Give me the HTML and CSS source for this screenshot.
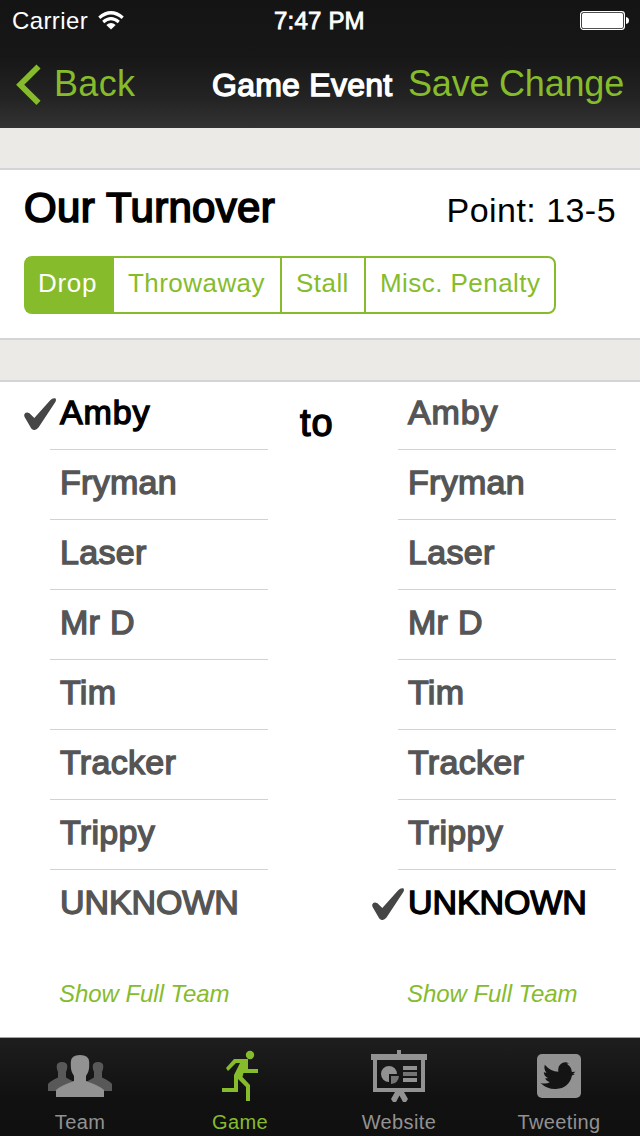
FILE: index.html
```html
<!DOCTYPE html>
<html lang="en">
<head>
<meta charset="utf-8">
<title>Game Event</title>
<link rel="stylesheet" href="styles.css">
</head>
<body>
<div class="app">
  <header class="top">
    <div class="status">
      <div class="carrier"><span>Carrier</span>
        <svg class="wifi" width="26" height="20" viewBox="0 0 26 20"><g fill="none" stroke="#fff"><path d="M1.300 6.700Q13 -3.200 24.700 6.700" stroke-width="3.200"/><path d="M5.200 11Q13 4.300 20.800 11" stroke-width="3"/></g><path d="M8.300 14Q13 10.200 17.700 14L13 18.600z" fill="#fff"/></svg>
      </div>
      <div class="clock">7:47 PM</div>
      <svg class="battery" width="50" height="20" viewBox="0 0 50 20"><rect x=".6" y=".6" width="43.800" height="17.800" rx="2.800" fill="none" stroke="#fff" stroke-width="1.200"/><rect x="2" y="2" width="41" height="15" rx="1.500" fill="#fff"/><path d="M46 6q3 .5 3 3.500t-3 3.500z" fill="#fff"/></svg>
    </div>
    <nav class="nav">
      <a class="back"><svg width="26" height="42" viewBox="0 0 26 42"><path d="M22.500 2.500L4.200 20.700L22.500 38.900" fill="none" stroke="#86bc2b" stroke-width="5.800"/></svg><span>Back</span></a>
      <h1 class="title medium">Game Event</h1>
      <a class="save">Save Change</a>
    </nav>
  </header>
  <section class="event">
    <div class="summary">
      <h2 class="kind medium">Our Turnover</h2>
      <div class="point">Point: 13-5</div>
    </div>
    <div class="segments">
      <div class="seg seg-drop on">Drop</div>
      <div class="seg seg-throw">Throwaway</div>
      <div class="seg seg-stall">Stall</div>
      <div class="seg seg-misc">Misc. Penalty</div>
    </div>
  </section>
  <main class="players">
    <div class="column">
      <ul class="list">
        <li class="medium chosen"><svg class="check" width="32" height="32" viewBox="0 0 32 32"><path d="M.3 16.500Q1 14.300 3.300 14.500L5.500 15.200L10.300 20L26 2.500Q28.500-.4 31.300.3Q32.500 1.300 31.500 3.800L14.500 29.500Q10.500 34 7.300 30.500L.6 19Q0 17.800.3 16.500z" fill="#464646"/></svg><span class="amby">Amby</span></li>
        <li class="medium">Fryman</li><li class="medium">Laser</li><li class="medium">Mr D</li><li class="medium">Tim</li><li class="medium">Tracker</li><li class="medium">Trippy</li>
        <li class="medium unknown">UNKNOWN</li>
      </ul>
      <a class="full">Show Full Team</a>
    </div>
    <div class="to medium">to</div>
    <div class="column">
      <ul class="list">
        <li class="medium"><span class="amby">Amby</span></li>
        <li class="medium">Fryman</li><li class="medium">Laser</li><li class="medium">Mr D</li><li class="medium">Tim</li><li class="medium">Tracker</li><li class="medium">Trippy</li>
        <li class="medium unknown chosen"><svg class="check" width="32" height="32" viewBox="0 0 32 32"><path d="M.3 16.500Q1 14.300 3.300 14.500L5.500 15.200L10.300 20L26 2.500Q28.500-.4 31.300.3Q32.500 1.300 31.500 3.800L14.500 29.500Q10.500 34 7.300 30.500L.6 19Q0 17.800.3 16.500z" fill="#464646"/></svg>UNKNOWN</li>
      </ul>
      <a class="full">Show Full Team</a>
    </div>
  </main>
  <footer class="tabs">
    <a class="tab team"><svg width="64" height="54" viewBox="0 -1 64 54"><g fill="#585858"><path d="M0 40V33Q2 30 10 26.500V21Q8.500 18 8.700 15Q9 11 14 11T19.300 15Q19.500 18 18 21V26.500L26 31V40z"/><path d="M64 40V33Q62 30 54 26.500V21Q55.500 18 55.300 15Q55 11 50 11T44.700 15Q44.500 18 46 21V26.500L38 31V40z"/></g><path d="M8 46V39Q11 35.500 26 30V25Q22.500 20 22.800 14V11Q23 4 32 4T41.200 11V14Q41.500 20 38 25V30Q53 35.500 56 39V46z" fill="#929292"/></svg><span>Team</span></a>
    <a class="tab game"><svg width="64" height="54" viewBox="0 -1 64 54"><g fill="#86bc2b"><circle cx="42" cy="4" r="4.200"/><path d="M26 8H40V18H50V22H35.500L34.500 26L42 34V50H38V36L30 28V41H14V37H26V24L32 12H28L20 20L18 17z"/></g></svg><span>Game</span></a>
    <a class="tab web"><svg width="64" height="54" viewBox="0 0 64 54"><g fill="#929292"><path d="M30 0h4v4h26v6h-2v32H6V10H4V4h26zM10 10v28h44V10z" fill-rule="evenodd"/><path d="M28 42h9l4 7-2 3h-3l-3.500-6.500L29 52h-3l-2-3z"/><path d="M22 16a8 8 0 1 0 0 16V24h8a8 8 0 0 0-8-8z"/><path d="M36 16h14v4H36zM36 28h14v4H36z"/></g><path d="M24 26h8q-.5 7-8 8zM36 22h14v4H36z" fill="#737373"/></svg><span>Website</span></a>
    <a class="tab tweet"><svg width="64" height="54" viewBox="0 0 64 54"><rect x="10" y="4" width="44" height="44" rx="5" fill="#929292"/><path d="M13.500 33q6 1.500 9.500-1-4-.8-4.800-4 1.700.4 2.800 0-4-1.600-4.200-6 1.400 1 2.700.7-3-3.200-1.700-8 5.500 6.600 13.500 7-.7-6 3.500-8.400 2.500-1.600 6-.8l-1.400 1 2.500-.3-1.500 1.300q4 2 4.500 7.500l3.600-.2-2.500 2 2 .3-3 1.500Q42 38.500 29 39q-9 .3-15.500-6z" fill="#141414"/></svg><span>Tweeting</span></a>
  </footer>
</div>
</body>
</html>
```
FILE: styles.css
```css
* { box-sizing: border-box; }
body { margin: 0; font-family: "Liberation Sans", Arial, sans-serif; color: #000; }
h1, h2, ul { margin: 0; padding: 0; font-weight: 400; list-style: none; }
svg { display: block; flex: none; }
.app { width: 640px; height: 1136px; display: flex; flex-direction: column; background: #fff; overflow: hidden; white-space: nowrap; }
.medium { -webkit-text-stroke: 1.4px currentColor; }

.top { height: 128px; background: linear-gradient(#141414 0, #171717 45%, #232323 76%, #333 100%); color: #fff; }
.status { height: 40px; display: grid; grid-template-columns: 262px 1fr 60px; font-size: 24px; line-height: 42px; }
.carrier { display: flex; gap: 10px; padding-left: 12px; letter-spacing: .4px; }
.wifi { margin-top: 11px; }
.clock { padding-left: 12px; letter-spacing: .2px; -webkit-text-stroke: .8px #fff; }
.battery { margin-top: 11px; }
.nav { height: 88px; display: grid; grid-template-columns: 212px 196px 1fr; line-height: 88px; }
.back { display: flex; padding-left: 16px; gap: 12px; font-size: 36px; line-height: 87px; letter-spacing: .3px; color: #86bc2b; }
.back svg { margin-top: 24px; }
.title { font-size: 32px; line-height: 90px; letter-spacing: .25px; }
.save { font-size: 36px; line-height: 87px; letter-spacing: -.2px; color: #86bc2b; }

.event { height: 212px; border-top: 40px solid #ebeae6; padding: 2px 24px 0; box-shadow: inset 0 2px #d4d3d8, inset 0 -2px #d4d3d8; }
.summary { height: 86px; display: flex; justify-content: space-between; }
.kind { font-size: 42px; line-height: 76px; letter-spacing: .3px; -webkit-text-stroke-width: 1.7px; }
.point { font-size: 34px; line-height: 81px; letter-spacing: .45px; }
.segments { display: flex; width: 532px; height: 58px; border: 2px solid #86bc2b; border-radius: 8px; font-size: 26px; line-height: 50px; color: #86bc2b; letter-spacing: .45px; }
.seg { border-right: 2px solid #86bc2b; padding-left: 14px; }
.seg-drop { width: 88px; padding-left: 12px; letter-spacing: .7px; }
.seg-throw { width: 168px; }
.seg-stall { width: 84px; }
.seg-misc { flex: 1; border: 0; }
.on { background: #86bc2b; color: #fff; }

.players { flex: 1; border-top: 40px solid #ebeae6; padding: 2px 24px 0 50px; box-shadow: inset 0 2px #d4d3d8; display: grid; grid-template-columns: 218px 130px 218px; }
.list li { position: relative; height: 70px; padding-left: 10px; border-bottom: 1px solid #d2d1d4; font-size: 34px; line-height: 65px; letter-spacing: .3px; color: #555; }
.list li:first-child { height: 68px; line-height: 61px; }
.list li:last-child { border: 0; }
.list .chosen { color: #000; }
.check { position: absolute; left: -26px; top: 18px; }
.list li:first-child .check { top: 16px; }
.amby { letter-spacing: .9px; }
.list .unknown { letter-spacing: -.1px; }
.to { padding-left: 32px; font-size: 38px; line-height: 83px; letter-spacing: 1px; }
.full { display: block; padding-left: 9px; margin-top: 29px; font-size: 24px; line-height: 50px; letter-spacing: -.05px; font-style: italic; color: #86bc2b; }

.tabs { height: 99px; border-top: 1px solid #a0a2a4; background: linear-gradient(#1e1e1e, #111 60%, #101010); display: grid; grid-template-columns: repeat(4, 1fr); }
.tab { display: flex; flex-direction: column; align-items: center; padding-top: 12px; font-size: 20px; line-height: 36px; letter-spacing: .4px; color: #929292; }
.web, .tweet { padding-right: 2px; }
.game { color: #86bc2b; }
```
